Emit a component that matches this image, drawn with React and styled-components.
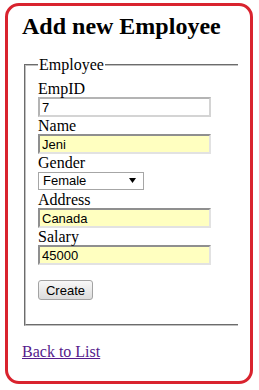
import React from 'react'
import styled, { createGlobalStyle } from 'styled-components'

const GlobalStyle = createGlobalStyle`
  body {
    margin: 0;
    background: #fff;
    font-family: "Liberation Serif", "Times New Roman", serif;
    color: #000;
  }
`

const Frame = styled.div`
  box-sizing: border-box;
  width: 248px;
  height: 381px;
  margin: 3px 0 0 5px;
  padding: 6px 0 0 14px;
  border: 3px solid #d9232e;
  border-radius: 14px;
`

const Title = styled.h2`
  margin: 0 0 16px;
  font-size: 24px;
  line-height: 28px;
  font-weight: bold;
`

const Fieldset = styled.fieldset`
  box-sizing: border-box;
  width: 214px;
  margin: 0 0 0 2px;
  padding: 6px 12px 24px;
  border: 2px groove #c0c0c0;
  border-right: none;
  min-width: 0;
`

const Legend = styled.legend`
  padding: 0 1px;
  font-size: 16px;
  line-height: 18px;
`

const Label = styled.label`
  display: block;
  font-size: 16px;
  line-height: 17px;
`

const Input = styled.input`
  display: block;
  box-sizing: border-box;
  width: 173px;
  height: 20px;
  margin: 0;
  padding: 0 2px;
  font-family: "Liberation Sans", Arial, sans-serif;
  font-size: 13px;
  color: #000;
  outline: none;
  border: 2px solid;
  border-color: ${p => (p.$filled ? '#8f8f8f #e2e2e2 #e2e2e2 #8f8f8f' : '#b4b4b4 #d4d4d4 #d4d4d4 #b4b4b4')};
  background: ${p => (p.$filled ? '#ffffc0' : '#fff')};
`

const SelectWrap = styled.div`
  position: relative;
  width: 106px;
  height: 18px;
  margin-bottom: 2px;
`

const Select = styled.select`
  box-sizing: border-box;
  width: 106px;
  height: 18px;
  margin: 0;
  padding: 0 4px;
  appearance: none;
  -webkit-appearance: none;
  border: 1px solid #a6a6a6;
  border-radius: 0;
  background: #fff;
  font-family: "Liberation Sans", Arial, sans-serif;
  font-size: 13px;
  color: #000;
  outline: none;
`

const Arrow = styled.svg`
  position: absolute;
  right: 8px;
  top: 7px;
  pointer-events: none;
`

const Button = styled.button`
  display: block;
  box-sizing: border-box;
  width: 55px;
  height: 20px;
  margin: 15px 0 0;
  padding: 0;
  border: 1px solid #a3a3a3;
  border-radius: 3px;
  background: linear-gradient(#f8f8f8, #dcdcdc);
  font-family: "Liberation Sans", Arial, sans-serif;
  font-size: 13px;
  color: #000;
`

const Back = styled.a`
  display: block;
  margin-top: 17px;
  font-size: 16px;
  line-height: 18px;
  color: #551a8b;
  text-decoration: underline;
`

export default function App() {
  return (
    <>
      <GlobalStyle />
      <Frame>
        <Title>Add new Employee</Title>
        <Fieldset>
          <Legend>Employee</Legend>
          <Label>EmpID</Label>
          <Input defaultValue="7" />
          <Label>Name</Label>
          <Input $filled defaultValue="Jeni" />
          <Label>Gender</Label>
          <SelectWrap>
            <Select defaultValue="Female">
              <option>Male</option>
              <option>Female</option>
            </Select>
            <Arrow width="7" height="5" viewBox="0 0 7 5">
              <path d="M0 0 H7 L3.5 5 Z" fill="#000" />
            </Arrow>
          </SelectWrap>
          <Label>Address</Label>
          <Input $filled defaultValue="Canada" />
          <Label>Salary</Label>
          <Input $filled defaultValue="45000" />
          <Button>Create</Button>
        </Fieldset>
        <Back href="#">Back to List</Back>
      </Frame>
    </>
  )
}
